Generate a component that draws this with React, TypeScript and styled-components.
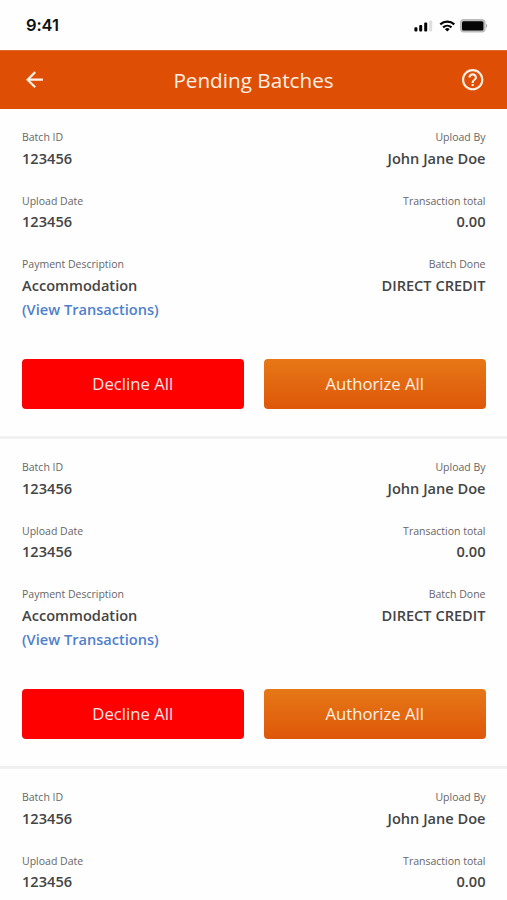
import React from "react";
import styled, { createGlobalStyle } from "styled-components";

const GlobalStyle = createGlobalStyle`
  * { box-sizing: border-box; }
  body { margin: 0; background: #fff; }
`;

const Screen = styled.div`
  width: 507px;
  height: 900px;
  overflow: hidden;
  background: #fefefe;
  font-family: "Open Sans", sans-serif;
  color: #444;
`;

const StatusBar = styled.div`
  height: 50px;
  padding: 0 20px 0 26px;
  display: flex;
  align-items: center;
  justify-content: space-between;
  font: 600 16.5px/20px Inter, sans-serif;
  letter-spacing: -0.1px;
  color: #111;
`;

const Header = styled.header`
  height: 59px;
  padding: 0 22px;
  display: grid;
  grid-template-columns: 24px 1fr 24px;
  align-items: center;
  background: #de4f05;
  border-top: 1px solid #e2692b;
  color: #fff0e6;
`;

const Title = styled.h1`
  margin: 0;
  text-align: center;
  font-size: 20.7px;
  line-height: 28px;
  font-weight: 400;
`;

const IconButton = styled.button`
  width: 24px;
  height: 24px;
  padding: 0;
  border: 0;
  background: none;
  color: inherit;
  display: flex;
`;

const Card = styled.section`
  height: 330px;
  padding: 20px 21.5px 0 22px;
  border-bottom: 3px solid #f1f1f1;
`;

const Details = styled.div`
  display: grid;
  grid-template-columns: 1fr 1fr;
  grid-template-rows: 63.5px 63.5px 103px;
`;

const Field = styled.div<{ $end?: boolean }>`
  display: flex;
  flex-direction: column;
  align-items: ${(p) => (p.$end ? "flex-end" : "flex-start")};
`;

const Label = styled.span`
  font-size: 10.5px;
  line-height: 16px;
  color: #666;
`;

const Value = styled.span`
  margin-top: 0.7px;
  font-size: 14.6px;
  line-height: 24px;
  font-weight: 600;
`;

const Link = styled.a`
  font-size: 14.6px;
  line-height: 24px;
  font-weight: 600;
  color: #5080cb;
`;

const Actions = styled.div`
  display: grid;
  grid-template-columns: 1fr 1fr;
  gap: 20.5px;
`;

const ActionButton = styled.button<{ $decline?: boolean }>`
  height: 50px;
  padding: 0;
  border: 0;
  border-radius: 4px;
  background: ${(p) => (p.$decline ? "#fe0000" : "linear-gradient(#e67816, #de570a)")};
  color: ${(p) => (p.$decline ? "#ffe2e2" : "#fff0e2")};
  font: 400 16.7px/24px "Open Sans", sans-serif;
`;

const StatusIcons = () => (
  <svg width="74" height="20" viewBox="413 15 74 20" fill="none">
    <g fill="#050505">
      <rect x="414.4" y="27.2" width="3" height="4.3" rx="0.9" />
      <rect x="419.2" y="25.1" width="3" height="6.4" rx="0.9" />
      <rect x="424.2" y="22.5" width="3" height="9" rx="0.9" />
    </g>
    <rect x="429.2" y="20.5" width="3" height="11" rx="0.9" fill="#dedede" />
    <g stroke="#050505" strokeWidth="2.2">
      <path d="M440.3 24.4a10.2 10.2 0 0 1 14 0" />
      <path d="M443.1 27.4a6.2 6.2 0 0 1 8.4 0" />
    </g>
    <path d="M444.9 29.2a3.5 3.5 0 0 1 4.8 0l-2.4 2.4z" fill="#050505" />
    <rect x="460" y="19" width="25.6" height="13.6" rx="3.8" fill="#bcbcbc" />
    <rect x="462" y="21.2" width="21.4" height="9.2" rx="1.5" fill="#050505" />
    <path d="M486 23.9a2 2 0 0 1 0 3.8z" fill="#aaa" />
  </svg>
);

const BackIcon = () => (
  <svg width="24" height="24" viewBox="0 0 24 24" fill="none" stroke="currentColor" strokeWidth="2.2">
    <path d="M20.9 11.7H5.8M13.2 4.1 5.6 11.7l7.600 7.600" />
  </svg>
);

const HelpIcon = () => (
  <svg width="24" height="24" viewBox="0 0 24 24" fill="currentColor">
    <g transform="translate(-1.1 -1.1) scale(1.067)">
      <path d="M11 18h2v-2h-2v2zm1-16C6.480 2 2 6.480 2 12s4.480 10 10 10 10-4.480 10-10S17.520 2 12 2zm0 18c-4.410 0-8-3.590-8-8s3.590-8 8-8 8 3.590 8 8-3.590 8-8 8zm0-14c-2.210 0-4 1.790-4 4h2c0-1.100.900-2 2-2s2 .900 2 2c0 2-3 1.750-3 5h2c0-2.250 3-2.500 3-5 0-2.210-1.790-4-4-4z" />
    </g>
  </svg>
);

type FieldData = { label: string; value: string; link?: string };

const summary: FieldData[] = [
  { label: "Batch ID", value: "123456" },
  { label: "Upload By", value: "John Jane Doe" },
  { label: "Upload Date", value: "123456" },
  { label: "Transaction total", value: "0.00" },
];

const payment: FieldData[] = [
  { label: "Payment Description", value: "Accommodation", link: "(View Transactions)" },
  { label: "Batch Done", value: "DIRECT CREDIT" },
];

const BatchCard = ({ fields, actions }: { fields: FieldData[]; actions?: boolean }) => (
  <Card>
    <Details>
      {fields.map((field, i) => (
        <Field key={field.label} $end={i % 2 === 1}>
          <Label>{field.label}</Label>
          <Value>{field.value}</Value>
          {field.link && <Link>{field.link}</Link>}
        </Field>
      ))}
    </Details>
    {actions && (
      <Actions>
        <ActionButton $decline>Decline All</ActionButton>
        <ActionButton>Authorize All</ActionButton>
      </Actions>
    )}
  </Card>
);

export default function App() {
  return (
    <>
      <GlobalStyle />
      <Screen>
        <StatusBar>
          <span>9:41</span>
          <StatusIcons />
        </StatusBar>
        <Header>
          <IconButton aria-label="Back"><BackIcon /></IconButton>
          <Title>Pending Batches</Title>
          <IconButton aria-label="Help"><HelpIcon /></IconButton>
        </Header>
        <main>
          <BatchCard fields={[...summary, ...payment]} actions />
          <BatchCard fields={[...summary, ...payment]} actions />
          <BatchCard fields={summary} />
        </main>
      </Screen>
    </>
  );
}
